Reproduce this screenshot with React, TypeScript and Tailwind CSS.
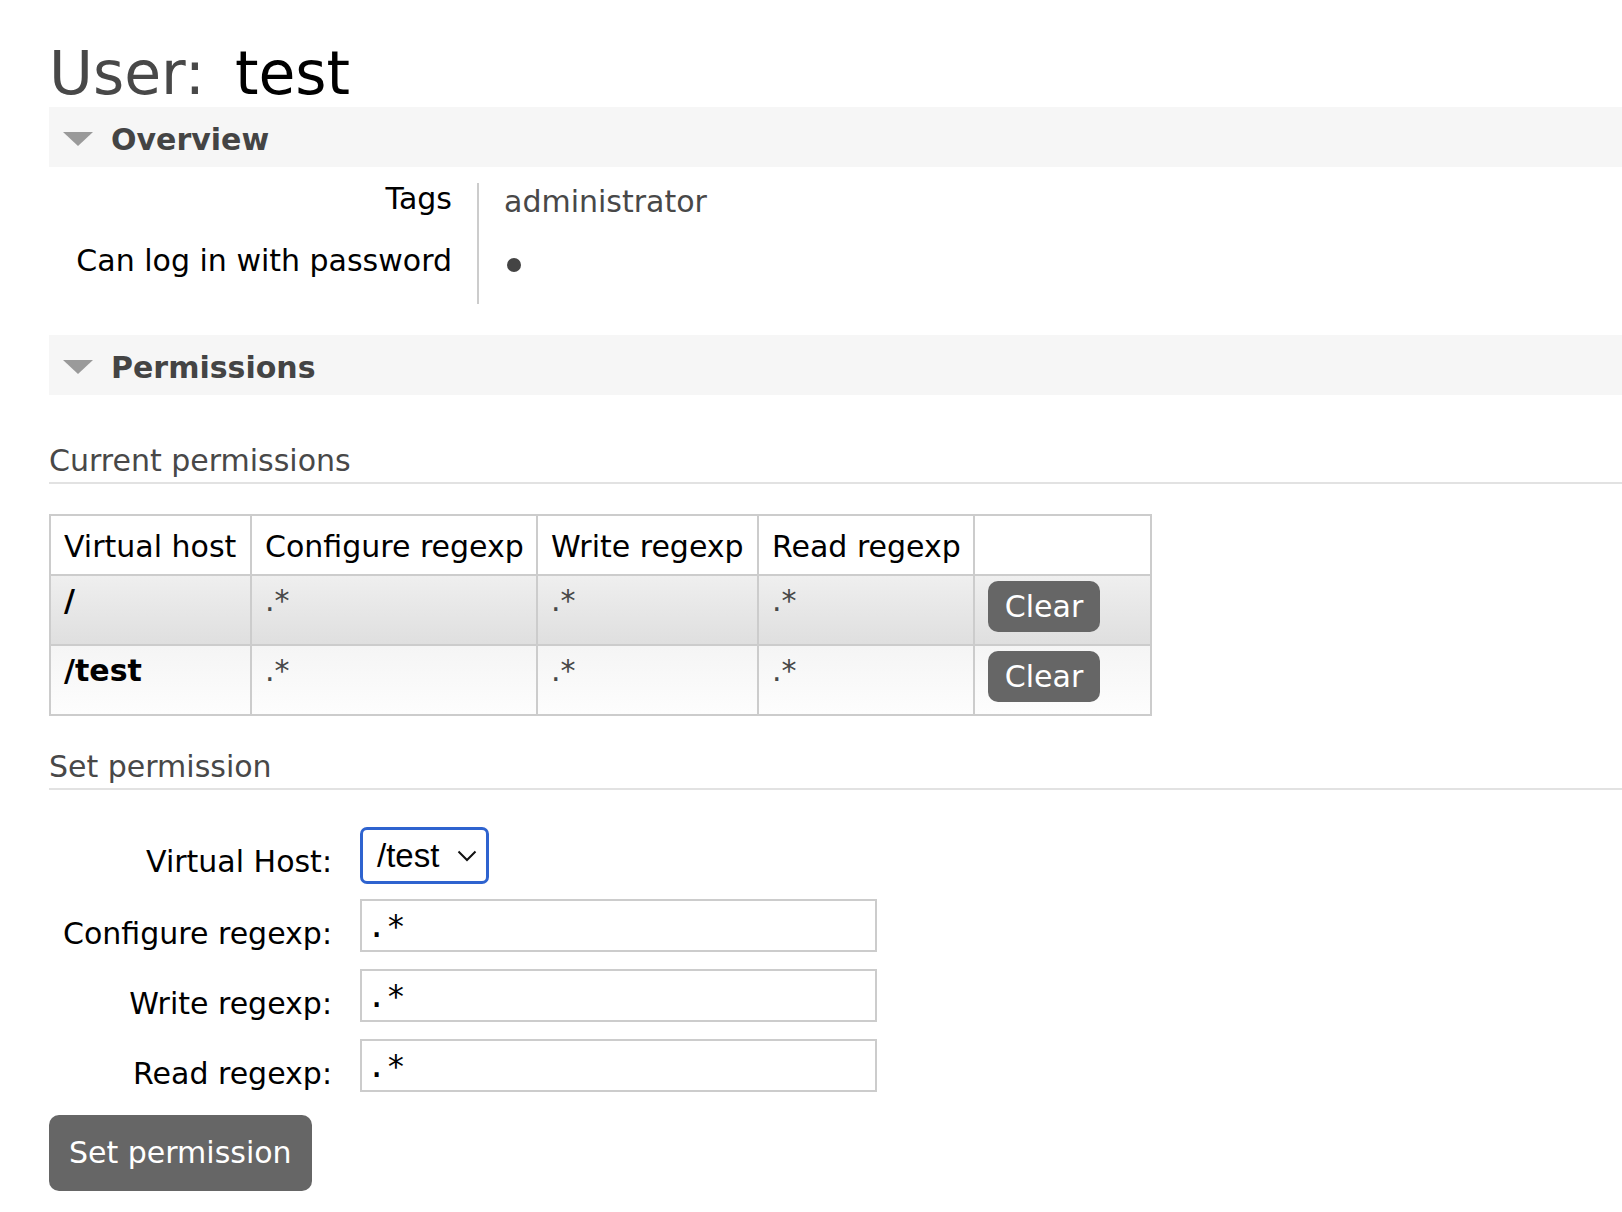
import React from "react";

const Triangle = () => (
  <svg width="30" height="14" viewBox="0 0 30 14" className="block shrink-0">
    <polygon points="0,0 30,0 15,14" fill="#9a9a9a" />
  </svg>
);

function Band({ title, mt }: { title: string; mt: string }) {
  return (
    <div className={`${mt} h-[60px] bg-[#f6f6f6] flex items-start`}>
      <div className="pl-[14px] pt-[25px]">
        <Triangle />
      </div>
      <div className="pl-[18px] pt-[18px] text-[30px] leading-[30px] font-bold text-[#444]">
        {title}
      </div>
    </div>
  );
}

function SubHeading({ title, mt }: { title: string; mt: string }) {
  return (
    <div
      className={`${mt} text-[30px] leading-[30px] text-[#484848] pb-[6px] border-b-2 border-[#e2e2e2]`}
    >
      {title}
    </div>
  );
}

const cols = ["Virtual host", "Configure regexp", "Write regexp", "Read regexp", ""];

const rows = [
  { vhost: "/", bg: "bg-linear-to-b from-[#efefef] to-[#dfdfdf]" },
  { vhost: "/test", bg: "bg-linear-to-b from-[#f5f5f5] to-[#fdfdfd]" },
];

function ClearButton() {
  return (
    <div className="w-[112px] h-[51px] rounded-[10px] bg-[#666] text-white flex items-center justify-center text-[30px] leading-[30px]">
      Clear
    </div>
  );
}

function Chevron() {
  return (
    <svg width="20" height="12" viewBox="0 0 20 12" className="block shrink-0">
      <polyline points="1.5,1.5 10,10 18.5,1.5" fill="none" stroke="#111" strokeWidth="2" />
    </svg>
  );
}

function RegexInput() {
  return (
    <input
      defaultValue=".*"
      className="block w-[517px] h-[53px] border-2 border-[#cccccc] px-[5px] font-['DejaVu_Sans_Mono',monospace] text-[32px] leading-[32px] text-black bg-white outline-none"
    />
  );
}

export default function App() {
  const cellBorder = "border-r-2 border-b-2 border-[#cccccc]";
  return (
    <div className="min-h-[1212px] bg-white pl-[49px] font-['DejaVu_Sans',Verdana,sans-serif] text-black">
      {/* Title */}
      <h1 className="pt-[43px] text-[60px] leading-[60px] font-normal text-[#484848] whitespace-nowrap">
        User:<span className="ml-[30px] text-black">test</span>
      </h1>

      {/* Overview */}
      <Band title="Overview" mt="mt-[4px]" />
      <div className="mt-[16px] grid grid-cols-[430px_auto] grid-rows-[62px_59px] w-fit">
        <div className="border-r-2 border-[#cccccc] text-right pr-[25px] pt-[1px] text-[30px] leading-[30px]">
          Tags
        </div>
        <div className="pl-[25px] pt-[4px] text-[30px] leading-[30px] text-[#484848]">
          administrator
        </div>
        <div className="border-r-2 border-[#cccccc] text-right pr-[25px] pt-[1px] text-[30px] leading-[30px] whitespace-nowrap">
          Can log in with password
        </div>
        <div className="pl-[28px] pt-[13px]">
          <div className="w-[14px] h-[14px] rounded-full bg-[#444]" />
        </div>
      </div>

      {/* Permissions */}
      <Band title="Permissions" mt="mt-[31px]" />

      <SubHeading title="Current permissions" mt="mt-[51px]" />

      <div className="mt-[30px] grid grid-cols-[201px_286px_221px_216px_177px] border-l-2 border-t-2 border-[#cccccc] w-fit text-[30px] leading-[30px]">
        {cols.map((c, i) => (
          <div key={i} className={`h-[60px] pt-[16px] px-[13px] bg-white whitespace-nowrap ${cellBorder}`}>
            {c}
          </div>
        ))}
        {rows.map((r) => (
          <React.Fragment key={r.vhost}>
            <div className={`h-[70px] pt-[10px] px-[13px] font-bold ${r.bg} ${cellBorder}`}>{r.vhost}</div>
            <div className={`h-[70px] pt-[10px] px-[13px] text-[#484848] ${r.bg} ${cellBorder}`}>.*</div>
            <div className={`h-[70px] pt-[10px] px-[13px] text-[#484848] ${r.bg} ${cellBorder}`}>.*</div>
            <div className={`h-[70px] pt-[10px] px-[13px] text-[#484848] ${r.bg} ${cellBorder}`}>.*</div>
            <div className={`h-[70px] pt-[5px] px-[13px] ${r.bg} ${cellBorder}`}>
              <ClearButton />
            </div>
          </React.Fragment>
        ))}
      </div>

      <SubHeading title="Set permission" mt="mt-[36px]" />

      {/* Form */}
      <div className="mt-[37px] grid grid-cols-[283px_auto] gap-x-[28px] w-fit text-[30px] leading-[30px]">
        <div className="h-[72px] pt-[20px] text-right whitespace-nowrap">Virtual Host:</div>
        <div className="h-[72px]">
          <div className="w-fit h-[57px] border-[3px] border-[#2e63cf] rounded-[7px] bg-white flex items-center pl-[14px] pr-[9px] gap-[18px]">
            <span className="font-['Liberation_Sans',Arial,sans-serif] text-[33px] leading-[33px] text-black">
              /test
            </span>
            <Chevron />
          </div>
        </div>

        <div className="h-[70px] pt-[20px] text-right whitespace-nowrap">Configure regexp:</div>
        <div className="h-[70px]">
          <RegexInput />
        </div>

        <div className="h-[70px] pt-[20px] text-right whitespace-nowrap">Write regexp:</div>
        <div className="h-[70px]">
          <RegexInput />
        </div>

        <div className="h-[53px] pt-[20px] text-right whitespace-nowrap">Read regexp:</div>
        <div className="h-[53px]">
          <RegexInput />
        </div>
      </div>

      <button className="mt-[23px] h-[76px] px-[20px] rounded-[10px] bg-[#666] text-white text-[30px] leading-[30px] flex items-center whitespace-nowrap">
        Set permission
      </button>
    </div>
  );
}
